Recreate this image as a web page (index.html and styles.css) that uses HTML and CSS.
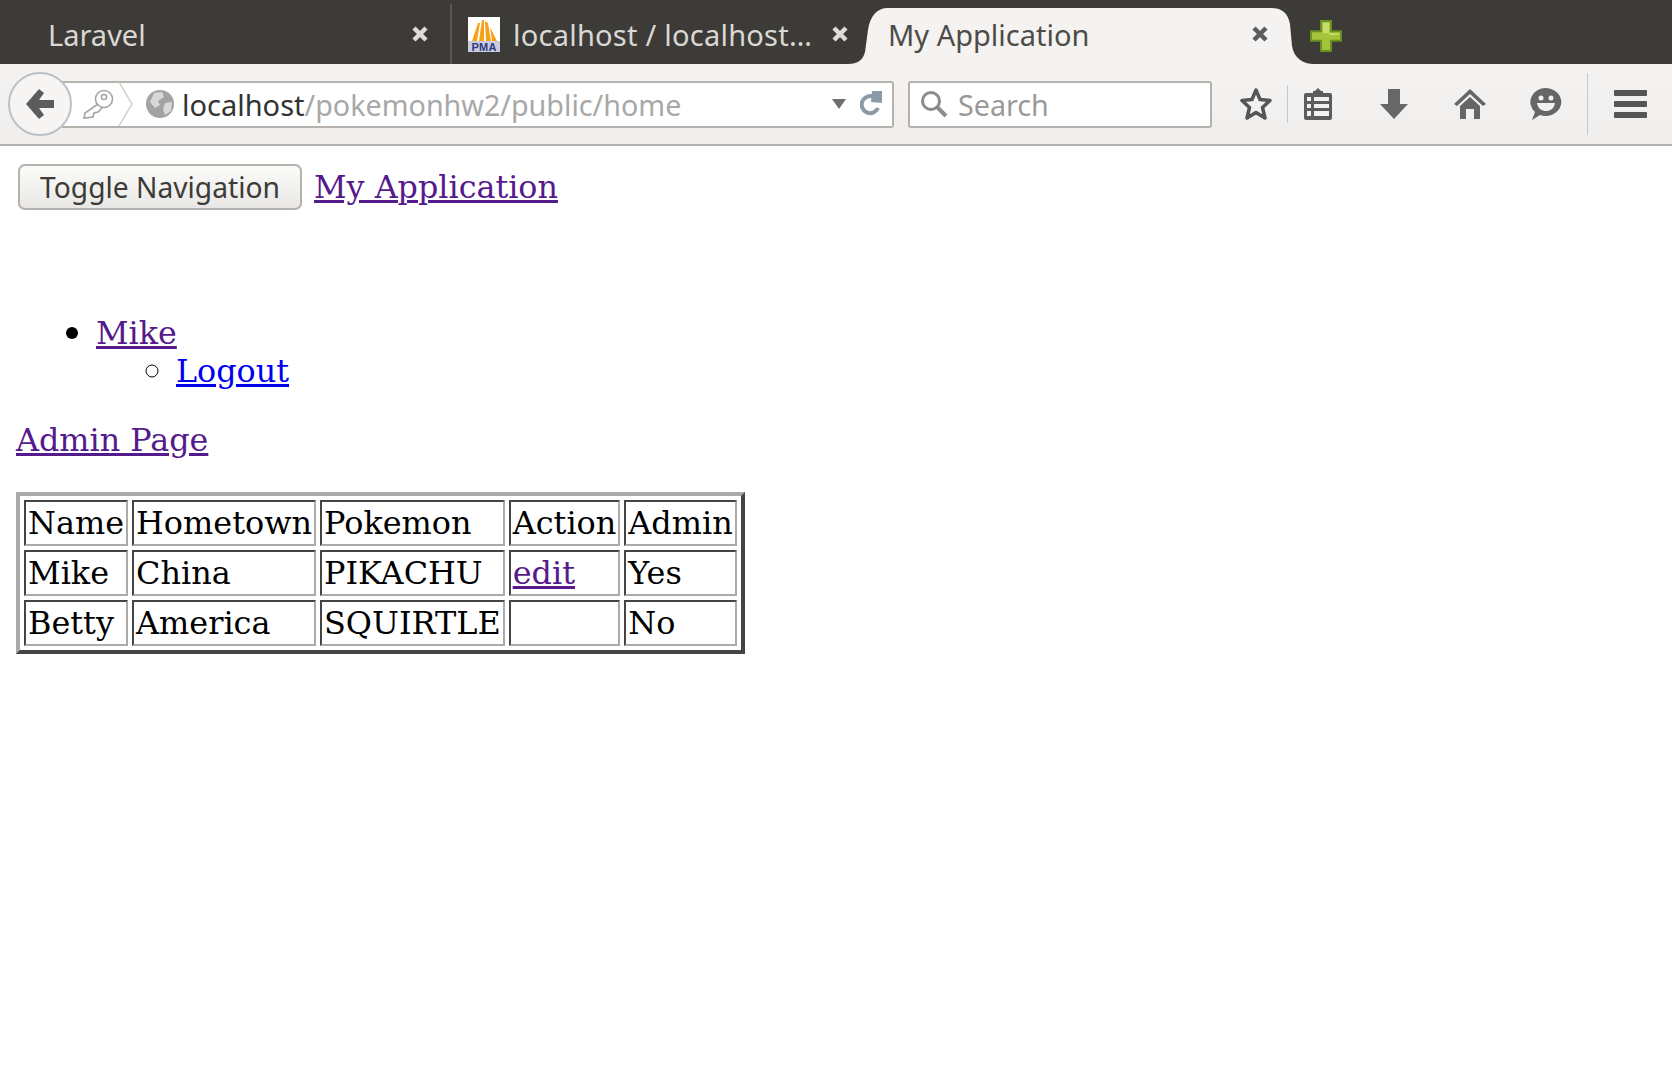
FILE: index.html
```html
<!DOCTYPE html>
<html lang="en">
<head>
  <meta charset="UTF-8">
  <title>My Application</title>
  <link rel="stylesheet" href="styles.css">
</head>
<body>
  <!-- Browser tabs -->
  <div class="tabbar">
    <div class="tab tab-first">
      <span class="tab-title">Laravel</span>
      <svg class="tab-close" width="16" height="16" viewBox="0 0 16 16"><path d="M2 2 L14 14 M14 2 L2 14" stroke="#dedcd8" stroke-width="4.500"/></svg>
    </div>
    <div class="tab-sep"></div>
    <div class="tab tab-second">
      <svg class="pma" width="32" height="35" viewBox="0 0 32 35">
        <rect width="32" height="35" fill="#fff"/>
        <path d="M4 24 L10 6 L12 6 L9 24Z M11 24 L14 3 L16 3 L16 24Z M18 24 L17 4 L20 6 L23 24Z M24 24 L22 10 L29 24Z" fill="#f7a11a"/>
        <rect y="24" width="32" height="11" fill="#c9cce0"/>
        <text class="pma-text" x="16" y="34">PMA</text>
      </svg>
      <span class="tab-title">localhost / localhost…</span>
      <svg class="tab-close" width="16" height="16" viewBox="0 0 16 16"><path d="M2 2 L14 14 M14 2 L2 14" stroke="#dedcd8" stroke-width="4.500"/></svg>
    </div>
    <svg class="curve" width="40" height="56" viewBox="0 0 40 56">
      <path d="M0 56 C10 56 15 52 17 44 L20 22 C22 8 29 0 40 0 L40 56Z" fill="#f4f3f2"/>
    </svg>
    <div class="tab tab-active">
      <span class="tab-title">My Application</span>
      <svg class="tab-close" width="16" height="16" viewBox="0 0 16 16"><path d="M2 2 L14 14 M14 2 L2 14" stroke="#5c5c5c" stroke-width="4.500"/></svg>
    </div>
    <svg class="curve" width="43" height="56" viewBox="0 0 43 56">
      <path d="M0 0 C12 0 17 6 19 16 L21 38 C23 50 32 56 43 56 L0 56Z" fill="#f4f3f2"/>
    </svg>
    <svg class="newtab" width="32" height="32" viewBox="0 0 32 34" preserveAspectRatio="none">
      <path d="M11 1H21V12H31V22H21V33H11V22H1V12H11Z" fill="#a4c23a" stroke="#6a8f22" stroke-width="2"/>
      <path d="M13 3H19V14H29V16H19V14H13Z" fill="#c6dc6c"/>
    </svg>
  </div>

  <!-- Browser toolbar -->
  <div class="toolbar">
    <div class="back">
      <svg width="30" height="32" viewBox="0 0 30 32">
        <path d="M14 1 L1 16 L14 31 L19 27 L14 20 H29 V12 H14 L19 5Z" fill="#5c5c5c"/>
      </svg>
    </div>
    <div class="urlbar">
      <svg class="key" width="32" height="30" viewBox="0 0 32 30">
        <g fill="none" stroke="#a5a5a5" stroke-width="1.6">
          <circle cx="22" cy="10" r="8.5"/>
          <circle cx="22" cy="8" r="2.5"/>
          <path d="M16 15 L3 24 L2 29 L11 28 L12 24 L16 23 L20 19"/>
        </g>
      </svg>
      <svg class="chevron" width="16" height="44" viewBox="0 0 16 44">
        <path d="M1 0 L14 22 L1 44" fill="none" stroke="#d4d2cf" stroke-width="1.5"/>
      </svg>
      <svg class="globe" width="28" height="30" viewBox="0 0 28 30">
        <circle cx="14" cy="15" r="14" fill="#a3a3a3"/>
        <path d="M8 4 L16 3 L18 8 L12 12 L14 16 L9 19 L4 13Z M19 14 L26 13 L25 22 L19 26 L17 20Z" fill="#d8d8d8"/>
      </svg>
      <span class="url"><span class="url-host">localhost</span>/pokemonhw2/public/home</span>
      <svg class="drop" width="14" height="10" viewBox="0 0 14 10">
        <path d="M0 0H14L7 10Z" fill="#6f6f6f"/>
      </svg>
      <svg class="reload" width="22" height="26" viewBox="0 0 22 26">
        <path d="M18 17 A8.5 8.5 0 1 1 14 6" fill="none" stroke="#8a9aa8" stroke-width="4"/>
        <path d="M12 0 L22 0 L22 12 L11 11Z" fill="#8a9aa8"/>
      </svg>
    </div>
    <div class="searchbar">
      <svg width="28" height="28" viewBox="0 0 28 28">
        <circle cx="11" cy="11" r="8.5" fill="none" stroke="#8c8c8c" stroke-width="3"/>
        <path d="M17 17 L26 26" stroke="#8c8c8c" stroke-width="4"/>
      </svg>
      <span class="search-text">Search</span>
    </div>
    <svg class="tool-star" width="32" height="34" viewBox="0 0 32 34">
      <path d="M16 3 L20 12.500 L30 13.500 L22.500 20.500 L25 31 L16 25.500 L7 31 L9.500 20.500 L2 13.500 L12 12.500Z" fill="none" stroke="#555" stroke-width="3.500" stroke-linejoin="round"/>
    </svg>
    <div class="tool-sep"></div>
    <svg class="tool-clip" width="28" height="32" viewBox="0 0 28 32">
      <path d="M9 3 H11 L14 0 L17 3 H19 V5 H26 Q28 5 28 7 V30 Q28 32 26 32 H2 Q0 32 0 30 V7 Q0 5 2 5 H9Z" fill="#5c5c5c"/>
      <path d="M3 9H7V13H3Z M10 9H25V13H10Z M3 16H7V20H3Z M10 16H25V20H10Z M3 23H7V28H3Z M10 23H25V28H10Z" fill="#f2f1f0"/>
    </svg>
    <svg class="tool-down" width="28" height="30" viewBox="0 0 28 30">
      <path d="M8 0H20V15H28L14 30L0 15H8Z" fill="#686868"/>
    </svg>
    <svg class="tool-home" width="32" height="30" viewBox="0 0 32 30">
      <path d="M16 0 L32 15 L29 17 L16 5 L3 17 L0 15Z" fill="#666"/>
      <path d="M16 8 L26 17 V30 H20 V20 H12 V30 H6 V17Z" fill="#666"/>
    </svg>
    <svg class="tool-smile" width="32" height="32" viewBox="0 0 32 32">
      <path d="M16 0 A15.500 14 0 1 1 10 27 L2 32 L5 24 A15.500 14 0 0 1 16 0Z" fill="#666"/>
      <circle cx="11" cy="10" r="2.500" fill="#f2f1f0"/>
      <circle cx="21" cy="10" r="2.500" fill="#f2f1f0"/>
      <path d="M7 15 H25 C24 21 20 23 16 23 C12 23 8 21 7 15Z" fill="#f2f1f0"/>
    </svg>
    <div class="tool-sep tool-sep-tall"></div>
    <div class="hamburger"><span></span><span></span><span></span></div>
  </div>

  <!-- Page content -->
  <div class="page">
    <div class="nav-top">
      <button class="toggle">Toggle Navigation</button>
      <a href="#" class="visited brand">My Application</a>
    </div>
    <ul class="menu">
      <li>
        <a href="#" class="visited">Mike</a>
        <ul class="submenu">
          <li><a href="#" class="fresh">Logout</a></li>
        </ul>
      </li>
    </ul>
    <p class="admin"><a href="#" class="visited">Admin Page</a></p>
    <table class="people">
      <tr><td>Name</td><td>Hometown</td><td>Pokemon</td><td>Action</td><td>Admin</td></tr>
      <tr><td>Mike</td><td>China</td><td>PIKACHU</td><td><a href="#" class="visited">edit</a></td><td>Yes</td></tr>
      <tr><td>Betty</td><td>America</td><td>SQUIRTLE</td><td></td><td>No</td></tr>
    </table>
  </div>
</body>
</html>
```

FILE: styles.css
```css
body {
  margin: 0;
  background: #fff;
  font-family: "DejaVu Serif", serif;
  font-size: 31.8px;
  color: #000;
}

/* tabs */
.tabbar {
  height: 64px;
  background: #3d3b37;
  display: flex;
  align-items: flex-end;
  font-family: "Noto Sans", sans-serif;
  font-size: 29px;
  overflow: hidden;
}

.tab {
  height: 56px;
  padding-bottom: 4px;
  display: flex;
  align-items: center;
  box-sizing: border-box;
  white-space: nowrap;
  color: #dad8d4;
}

.tab-first {
  width: 450px;
  padding-left: 48px;
  padding-right: 22px;
}

.tab-second {
  width: 396px;
  padding-left: 16px;
  letter-spacing: 0.24px;
}

.tab-active {
  width: 383px;
  padding-right: 3px;
  background: #f4f3f2;
  color: #4e4c48;
}

.tab-title {
  flex: 1;
}

.tab-close {
  flex: none;
}

.tab-sep {
  width: 2px;
  height: 60px;
  background: #5a5852;
}

.pma {
  margin-right: 13px;
}

.pma-text {
  font-family: "Liberation Sans", sans-serif;
  font-size: 11px;
  font-weight: bold;
  fill: #2d3a80;
  text-anchor: middle;
}

.curve {
  flex: none;
}

.newtab {
  flex: none;
  margin-left: -4px;
  margin-bottom: 12px;
}

/* toolbar */
.toolbar {
  height: 82px;
  box-sizing: border-box;
  border-bottom: 2px solid #b5b1ac;
  background: linear-gradient(#f4f3f2, #efeeed);
  display: flex;
  align-items: center;
  font-family: "Noto Sans", sans-serif;
  font-size: 28.7px;
  padding-left: 8px;
}

.back {
  width: 64px;
  height: 64px;
  flex: none;
  border-radius: 50%;
  background: #f6f5f4;
  border: 2px solid #b9c2ca;
  box-sizing: border-box;
  display: flex;
  align-items: center;
  justify-content: center;
  position: relative;
  z-index: 1;
}

.urlbar {
  width: 832px;
  height: 47px;
  margin-left: -10px;
  box-sizing: border-box;
  background: #fff;
  border: 2px solid #b5b1ac;
  border-left: none;
  border-radius: 0 3px 3px 0;
  display: flex;
  align-items: center;
  padding-left: 20px;
}

.key {
  margin-right: 4px;
}

.chevron {
  margin-right: 12px;
}

.globe {
  margin-right: 8px;
}

.url {
  flex: 1;
  color: #a8a8a8;
  white-space: nowrap;
}

.url-host {
  color: #333;
  font-size: 29px;
}

.drop {
  margin-right: 14px;
}

.reload {
  margin-right: 10px;
}

.searchbar {
  width: 304px;
  height: 47px;
  margin-left: 14px;
  box-sizing: border-box;
  background: #fff;
  border: 2px solid #b5b1ac;
  border-radius: 3px;
  display: flex;
  align-items: center;
  padding-left: 10px;
  gap: 10px;
  color: #999;
}

.tool-star {
  margin-left: 28px;
}

.tool-sep {
  width: 1px;
  height: 38px;
  margin-left: 15px;
  background: #c3c8cd;
}

.tool-sep-tall {
  height: 62px;
  margin-left: 25px;
}

.tool-clip {
  margin-left: 16px;
}

.tool-down {
  margin-left: 48px;
}

.tool-home {
  margin-left: 46px;
}

.tool-smile {
  margin-left: 44px;
}

.hamburger {
  margin-left: 26px;
  width: 33px;
  display: flex;
  flex-direction: column;
  gap: 5px;
}

.hamburger span {
  height: 6px;
  border-radius: 1px;
  background: #555;
}

/* page */
.page {
  padding: 14px 16px 0;
}

.nav-top {
  display: flex;
  align-items: center;
  gap: 12px;
  height: 54px;
}

.brand {
  margin-bottom: 2px;
}

.toggle {
  width: 284px;
  height: 46px;
  box-sizing: border-box;
  margin-left: 2px;
  padding: 0;
  background: linear-gradient(#fbfbfa, #e9e8e6);
  border: 2px solid #b5b1ac;
  border-radius: 7px;
  font-family: "Noto Sans", sans-serif;
  font-size: 28.2px;
  color: #3d3b37;
}

a {
  text-decoration: underline;
}

a.visited {
  color: #551a8b;
}

a.fresh {
  color: #0000ee;
}

.menu {
  margin: 99px 0 0;
  padding-left: 80px;
  line-height: 36px;
}

.menu li::marker {
  font-size: 38px;
}

.submenu {
  margin: 0;
  padding-left: 80px;
}

.admin {
  margin: 32px 0 0;
  line-height: 38px;
}

.people {
  margin-top: 33px;
  font-size: 31.9px;
  border-style: solid;
  border-width: 4px;
  border-color: #aaa #444 #444 #aaa;
  border-spacing: 4px;
}

.people td {
  border-style: solid;
  border-width: 2px;
  border-color: #444 #aaa #aaa #444;
  padding: 2px;
  height: 38px;
}
```
